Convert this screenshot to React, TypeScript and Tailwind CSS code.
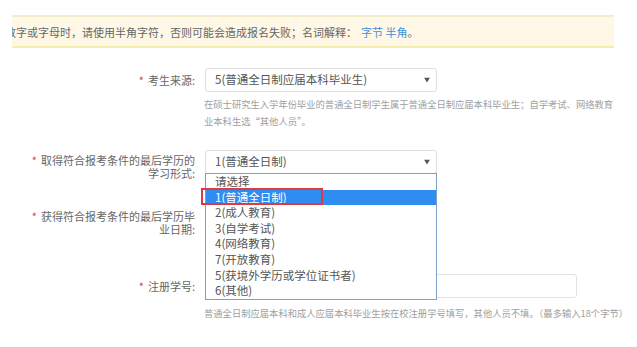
import React from "react";

const font = { fontFamily: '"Noto Sans CJK SC", "Noto Sans", sans-serif' };

function Arrow() {
  return (
    <svg width="6" height="5" viewBox="0 0 6 5" className="absolute right-[6px] top-1/2 -translate-y-1/2">
      <path d="M0 0 L6 0 L3 5 Z" fill="#555" />
    </svg>
  );
}

const options = [
  "请选择",
  "1(普通全日制)",
  "2(成人教育)",
  "3(自学考试)",
  "4(网络教育)",
  "7(开放教育)",
  "5(获境外学历或学位证书者)",
  "6(其他)",
];

export default function App() {
  return (
    <div
      className="relative w-[637px] h-[347px] overflow-hidden bg-white text-[#555]"
      style={font}
    >
      <div className="pt-[15px]">
        <div className="mx-[12px] w-[602px] h-[33px] bg-[#fff8e7] border-t-2 border-t-[#f3edcc] border-b-2 border-b-[#f4efae] overflow-hidden flex items-center">
          <div className="ml-[-7px] whitespace-nowrap text-[11px] leading-[14px] text-[#666]">
            数字或字母时，请使用半角字符，否则可能会造成报名失败；名词解释：
            <span className="text-[#3f8fd8] ml-[4px]">字节 半角</span>。
          </div>
        </div>
      </div>

      {/* Row 1 */}
      <div className="mt-[20px] flex items-center gap-[10px]">
        <div className="w-[195px] text-right text-[11px] leading-[13px] text-[#666]">
          <span className="text-[#e4393c] mr-[4px]">*</span>考生来源:
        </div>
        <div className="relative w-[232px] h-[24px] border border-[#dedede] rounded-[3px] flex items-center pl-[9px] text-[11.5px] text-[#555]">
          5(普通全日制应届本科毕业生)
          <Arrow />
        </div>
      </div>
      <div className="ml-[204px] mt-[4px] text-[9.3px] leading-[17px] text-[#a0a0a0] whitespace-nowrap">
        <div>在硕士研究生入学年份毕业的普通全日制学生属于普通全日制应届本科毕业生；自学考试、网络教育</div>
        <div>业本科生选“其他人员”。</div>
      </div>

      {/* Row 2 */}
      <div className="mt-[20px] flex items-start gap-[10px]">
        <div className="w-[195px] pt-[4px] text-right text-[11px] leading-[13px] text-[#666]">
          <div className="whitespace-nowrap">
            <span className="text-[#e4393c] mr-[4px]">*</span>取得符合报考条件的最后学历的
          </div>
          <div>学习形式:</div>
        </div>
        <div className="relative z-10 w-[232px] h-[24px] border border-[#dedede] rounded-[3px] flex items-center pl-[9px] text-[11.5px] text-[#555]">
          1(普通全日制)
          <Arrow />
          <div className="absolute left-[-1px] top-[22px] w-[232px] bg-white border border-[#7f9fc8]">
            {options.map((o, i) => (
              <div
                key={o}
                className={
                  i === 1
                    ? "h-[15.6px] leading-[15.6px] pl-[9px] text-[11.5px] bg-[#2f8cf0] text-white"
                    : "h-[15.6px] leading-[15.6px] pl-[9px] text-[11.5px] text-[#555]"
                }
              >
                {o}
              </div>
            ))}
          </div>
          <div className="absolute left-[-5px] top-[37px] w-[122px] h-[17px] border-2 border-[#e0393e]" />
        </div>
      </div>

      {/* Row 3 */}
      <div className="mt-[26px] flex items-start gap-[10px]">
        <div className="w-[195px] pt-[4px] text-right text-[11px] leading-[13px] text-[#666]">
          <div className="whitespace-nowrap">
            <span className="text-[#e4393c] mr-[4px]">*</span>获得符合报考条件的最后学历毕
          </div>
          <div>业日期:</div>
        </div>
        <div className="w-[232px] h-[24px] border border-[#dedede] rounded-[3px]" />
      </div>

      {/* Row 4 */}
      <div className="mt-[38px] flex items-center gap-[10px]">
        <div className="w-[195px] text-right text-[11px] leading-[13px] text-[#666]">
          <span className="text-[#e4393c] mr-[4px]">*</span>注册学号:
        </div>
        <div className="w-[372px] h-[24px] border border-[#e2e2e2] rounded-[3px]" />
      </div>
      <div className="ml-[204px] mt-[7px] text-[9.3px] leading-[17px] text-[#a0a0a0] whitespace-nowrap">
        普通全日制应届本科和成人应届本科毕业生按在校注册学号填写，其他人员不填。（最多输入18个字节）
      </div>
    </div>
  );
}
